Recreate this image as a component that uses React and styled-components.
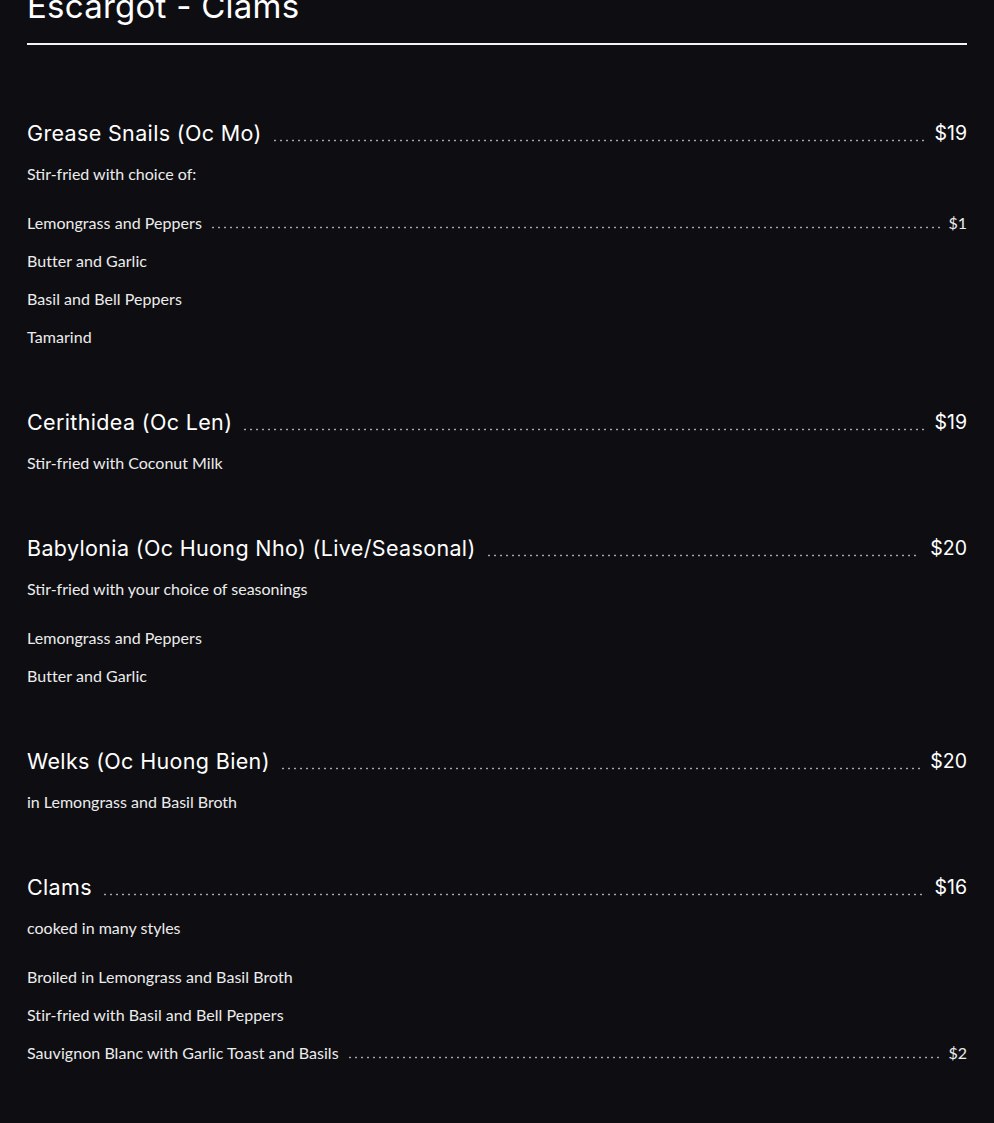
import React from 'react';
import styled, { createGlobalStyle } from 'styled-components';

const GlobalStyle = createGlobalStyle`
  html, body {
    margin: 0;
    padding: 0;
    background: #0e0e12;
  }
  body {
    font-family: 'Lato', 'Noto Sans', sans-serif;
    color: #ececec;
  }
`;

const menu = [
  {
    name: 'Grease Snails (Oc Mo)',
    price: '$19',
    desc: 'Stir-fried with choice of:',
    options: [
      { name: 'Lemongrass and Peppers', price: '$1' },
      { name: 'Butter and Garlic' },
      { name: 'Basil and Bell Peppers' },
      { name: 'Tamarind' },
    ],
  },
  { name: 'Cerithidea (Oc Len)', price: '$19', desc: 'Stir-fried with Coconut Milk' },
  {
    name: 'Babylonia (Oc Huong Nho) (Live/Seasonal)',
    price: '$20',
    desc: 'Stir-fried with your choice of seasonings',
    options: [{ name: 'Lemongrass and Peppers' }, { name: 'Butter and Garlic' }],
  },
  { name: 'Welks (Oc Huong Bien)', price: '$20', desc: 'in Lemongrass and Basil Broth' },
  {
    name: 'Clams',
    price: '$16',
    desc: 'cooked in many styles',
    options: [
      { name: 'Broiled in Lemongrass and Basil Broth' },
      { name: 'Stir-fried with Basil and Bell Peppers' },
      { name: 'Sauvignon Blanc with Garlic Toast and Basils', price: '$2' },
    ],
  },
];

const Page = styled.main`
  padding: 0 27px 40px;
  margin-top: -10px;
`;

const Section = styled.h1`
  margin: 0 0 73px;
  padding-bottom: 21px;
  border-bottom: 2px solid #f4f4f4;
  font-family: 'Inter', 'Noto Sans', sans-serif;
  font-weight: 400;
  font-size: 33px;
  line-height: 32px;
  letter-spacing: 0.25px;
  color: #fff;
`;

const Item = styled.section`
  margin-bottom: 58px;
`;

const Row = styled.div`
  display: flex;
  align-items: flex-end;
  height: ${(p) => (p.$big ? '30px' : '24px')};
`;

const Name = styled.h2`
  margin: 0;
  font-family: 'Inter', 'Noto Sans', sans-serif;
  font-weight: 400;
  font-size: 21.5px;
  line-height: 30px;
  letter-spacing: 0.35px;
  color: #fff;
  white-space: nowrap;
`;

const Price = styled.span`
  font-family: 'Inter', 'Noto Sans', sans-serif;
  font-weight: 400;
  font-size: 19.5px;
  line-height: 30px;
  color: #fff;
`;

const Leader = styled.span`
  flex: 1;
  height: 3px;
  margin: 0 ${(p) => (p.$small ? '8px' : '10px')} 6px;
  background-image: radial-gradient(circle, #a8a8a8 0.8px, transparent 1.2px);
  background-size: 6px 3px;
  background-repeat: repeat-x;
`;

const Desc = styled.p`
  margin: 14px 0 0;
  font-size: 16px;
  line-height: 24px;
  color: #ececec;
`;

const Options = styled.ul`
  list-style: none;
  margin: 25px 0 0;
  padding: 0;
  display: flex;
  flex-direction: column;
  gap: 14px;
`;

const OptionName = styled.span`
  font-size: 16px;
  line-height: 24px;
  letter-spacing: 0.05px;
  color: #ececec;
  white-space: nowrap;
`;

const OptionPrice = styled.span`
  font-size: 16px;
  line-height: 24px;
  color: #ececec;
`;

export default function App() {
  return (
    <>
      <GlobalStyle />
      <Page>
        <Section>Escargot - Clams</Section>
        {menu.map((item) => (
          <Item key={item.name}>
            <Row $big>
              <Name>{item.name}</Name>
              <Leader />
              <Price>{item.price}</Price>
            </Row>
            <Desc>{item.desc}</Desc>
            {item.options && (
              <Options>
                {item.options.map((o) => (
                  <Row as="li" key={o.name}>
                    <OptionName>{o.name}</OptionName>
                    {o.price && (
                      <>
                        <Leader $small />
                        <OptionPrice>{o.price}</OptionPrice>
                      </>
                    )}
                  </Row>
                ))}
              </Options>
            )}
          </Item>
        ))}
      </Page>
    </>
  );
}
